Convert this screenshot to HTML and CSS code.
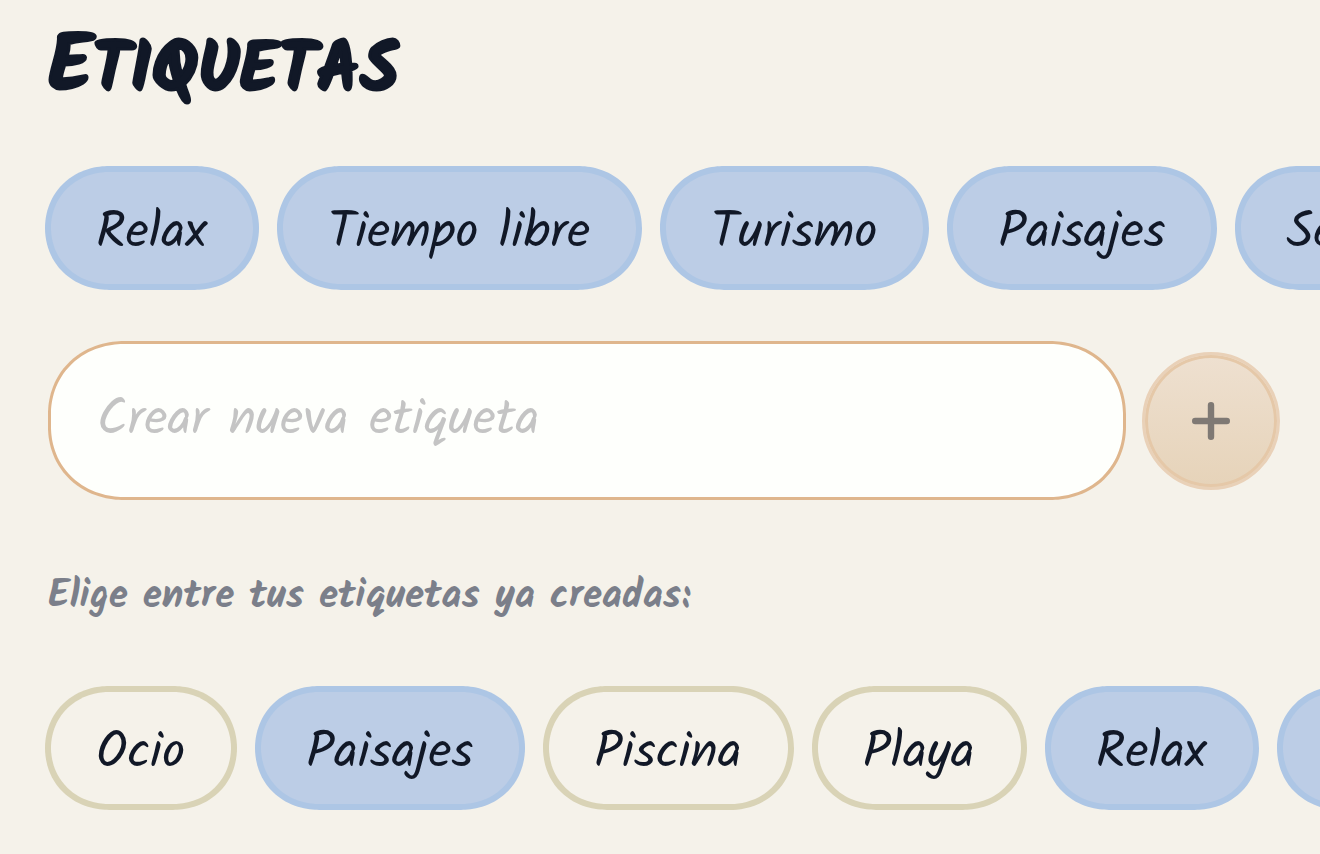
FILE: index.html
```html
<!DOCTYPE html>
<html lang="es">
<head>
<meta charset="utf-8">
<meta name="viewport" content="width=device-width, initial-scale=1">
<title>Etiquetas</title>
<link rel="stylesheet" href="styles.css">
</head>
<body>
<main class="tags">
  <h1 class="title">Etiquetas</h1>
  <div class="chips">
    <button type="button" class="chip chip-on">Relax</button>
    <button type="button" class="chip chip-on">Tiempo libre</button>
    <button type="button" class="chip chip-on">Turismo</button>
    <button type="button" class="chip chip-on">Paisajes</button>
    <button type="button" class="chip chip-on">Senderismo</button>
  </div>
  <form class="create">
    <input class="field" type="text" aria-label="Crear nueva etiqueta" placeholder="Crear nueva etiqueta">
    <button class="add" type="button" aria-label="Añadir etiqueta">
      <svg class="plus" viewBox="0 0 38 38" aria-hidden="true"><path d="M19 3.2v31.6M3.2 19h31.6"/></svg>
    </button>
  </form>
  <h2 class="hint">Elige entre tus etiquetas ya creadas:</h2>
  <div class="chips">
    <button type="button" class="chip">Ocio</button>
    <button type="button" class="chip chip-on">Paisajes</button>
    <button type="button" class="chip">Piscina</button>
    <button type="button" class="chip">Playa</button>
    <button type="button" class="chip chip-on">Relax</button>
    <button type="button" class="chip chip-on">Senderismo</button>
  </div>
</main>
</body>
</html>
```
FILE: styles.css
```css
* { box-sizing: border-box; }

body {
  margin: 0;
  background: #f5f2ea;
  color: #111827;
  font-family: Kalam, Lato, "Open Sans", sans-serif;
  overflow-x: hidden;
}

.tags { padding: 26px 0 40px; }

.title {
  margin: 0 48px;
  font-family: "Permanent Marker", Kalam, Lato, sans-serif;
  font-size: 70px;
  font-weight: 700;
  line-height: 88px;
  text-transform: uppercase;
  -webkit-text-stroke: 3px #111827;
}
.title::first-letter { font-size: 80px; }

.chips {
  display: flex;
  gap: 18px;
  margin-top: 49px;
  padding-left: 45px;
  overflow: hidden;
}

.chip {
  flex: none;
  height: 124px;
  padding: 10px 46px 0 45px;
  border: 6px solid #d9d3b6;
  border-radius: 64px / 62px;
  corner-shape: superellipse(1.05);
  background: transparent;
  color: inherit;
  font: inherit;
  font-size: 51px;
  white-space: nowrap;
}
.chip-on { border-color: #adc6e5; background: #bccde6; }

.create {
  display: flex;
  align-items: center;
  gap: 16px;
  margin: 51px 40px 0 48px;
}

.field {
  flex: 1;
  min-width: 0;
  height: 159px;
  padding: 0 46px;
  border: 3px solid #dfb68d;
  border-radius: 76px / 73px;
  corner-shape: superellipse(1.05);
  background: #fefffc;
  color: inherit;
  font: inherit;
  font-size: 51px;
}
.field::placeholder { color: #c4c4c4; opacity: 1; }

.add {
  display: grid;
  place-items: center;
  flex: none;
  width: 138px;
  height: 138px;
  padding: 0;
  border: 3px solid #e9d1b8;
  border-radius: 50%;
  background: linear-gradient(#eee0d0, #e6d3b9);
  box-shadow: inset 0 0 0 3px #e5c8a8;
}
.plus {
  width: 38px;
  fill: none;
  stroke: #7f7974;
  stroke-width: 6.4;
  stroke-linecap: round;
}

.hint {
  margin: 71px 48px 0;
  color: #7b7f8a;
  font-size: 39px;
  font-weight: 700;
  line-height: 52px;
}
.hint + .chips { margin-top: 63px; }
```
